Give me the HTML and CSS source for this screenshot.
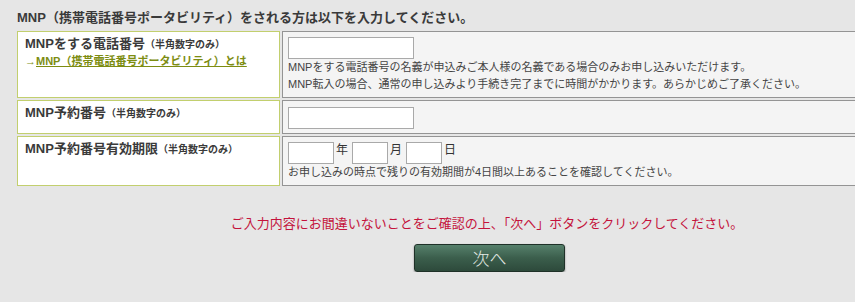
FILE: index.html
```html
<!DOCTYPE html>
<html lang="ja">
<head>
  <meta charset="UTF-8" />
  <title>MNP入力</title>
  <link rel="stylesheet" href="styles.css">
</head>
<body>
  <div class="page">
    <h2 class="lead">MNP（携帯電話番号ポータビリティ）をされる方は以下を入力してください。</h2>

    <table class="form">
      <tr>
        <th>
          MNPをする電話番号<span class="sub">（半角数字のみ）</span><br>
          <span class="link">→<a href="#">MNP（携帯電話番号ポータビリティ）とは</a></span>
        </th>
        <td>
          <input type="text" class="wide" />
          <p class="note">MNPをする電話番号の名義が申込みご本人様の名義である場合のみお申し込みいただけます。<br>
          MNP転入の場合、通常の申し込みより手続き完了までに時間がかかります。あらかじめご了承ください。</p>
        </td>
      </tr>
      <tr>
        <th>MNP予約番号<span class="sub">（半角数字のみ）</span></th>
        <td class="short"><input type="text" class="wide" /></td>
      </tr>
      <tr>
        <th>MNP予約番号有効期限<span class="sub">（半角数字のみ）</span></th>
        <td>
          <div class="date">
            <input type="text" class="year" /><span>年</span>
            <input type="text" class="day" /><span>月</span>
            <input type="text" class="day" /><span>日</span>
          </div>
          <p class="note">お申し込みの時点で残りの有効期間が4日間以上あることを確認してください。</p>
        </td>
      </tr>
    </table>

    <p class="confirm">ご入力内容にお間違いないことをご確認の上、「次へ」ボタンをクリックしてください。</p>
    <div class="actions">
      <button class="next">次へ</button>
    </div>
  </div>
</body>
</html>
```

FILE: styles.css
```css
body {
  margin: 0;
  background: #e6e6e6;
  font-family: "Liberation Sans", "Noto Sans CJK JP", sans-serif;
  color: #333;
}
.page {
  width: 940px;
  margin-left: 17px;
}
.lead {
  margin: 9px 0 2px;
  font-size: 13px;
  line-height: 18px;
  font-weight: bold;
  color: #3a3a3a;
}
.form {
  width: 944px;
  margin-left: -2px;
  border-spacing: 2px;
}
.form th {
  box-sizing: border-box;
  width: 263px;
  padding: 4px 7px;
  background: #fff;
  border: 1px solid #c2cf6e;
  text-align: left;
  vertical-align: top;
  font-size: 13px;
  line-height: 16px;
  font-weight: bold;
  color: #3a3a3a;
}
.form th .sub {
  font-size: 10px;
}
.form th .link {
  font-size: 11px;
  color: #7d8d12;
}
.form th .link a {
  color: #7d8d12;
}
.form td {
  padding: 5px 5px 4px;
  background: #f4f4f4;
  border: 1px solid #949494;
  vertical-align: top;
}
.form td.short {
  padding: 6px 5px 4px;
}
input {
  display: block;
  box-sizing: border-box;
  height: 22px;
  margin: 0;
  padding: 2px;
  background: #fff;
  border: 1px solid #a9a9a9;
}
.wide {
  width: 126px;
}
.date {
  display: flex;
  align-items: flex-start;
  font-size: 12px;
  line-height: 16px;
}
.date span {
  margin: 0 4px 0 2px;
}
.year {
  width: 46px;
}
.day {
  width: 36px;
}
.note {
  margin: 0;
  font-size: 11px;
  line-height: 17px;
  color: #444;
}
.confirm {
  margin: 27px 0 0;
  text-align: center;
  font-size: 13px;
  line-height: 18px;
  color: #c4133c;
}
.actions {
  margin-top: 11px;
  padding-left: 5px;
  text-align: center;
}
.next {
  width: 151px;
  height: 28px;
  padding: 0;
  border: 1px solid #1f3128;
  border-radius: 3px;
  background: linear-gradient(#56806b, #3b5e4c 50%, #2d4a3b);
  box-shadow: 0 1px 2px rgba(0, 0, 0, 0.4);
  color: #e4ebe5;
  font-family: "Noto Sans CJK JP", sans-serif;
  font-size: 17px;
  font-weight: 300;
  line-height: 26px;
  cursor: pointer;
}
```
